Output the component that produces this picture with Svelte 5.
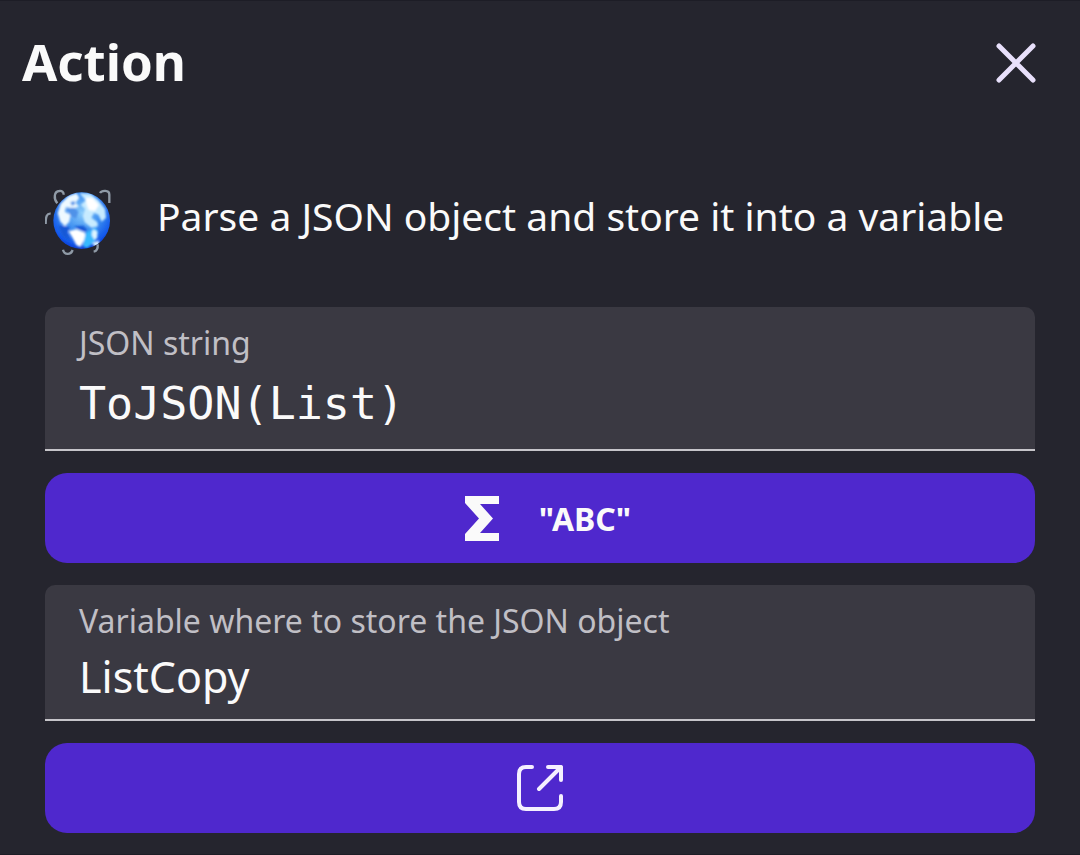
<script>
	let jsonString = 'ToJSON(List)';
	let variableName = 'ListCopy';
</script>

<main class="dialog">
	<header class="dialog-header">
		<h1>Action</h1>
		<button class="close" type="button" aria-label="Close">
			<svg viewBox="0 0 40 40" aria-hidden="true">
				<path d="M3 3 37 37M37 3 3 37" />
			</svg>
		</button>
	</header>

	<form class="content" on:submit|preventDefault>
		<div class="description">
			<svg class="globe" viewBox="45 39 198 198" aria-hidden="true">
				<defs>
					<radialGradient id="sea" cx="0.5" cy="0.36" r="0.66">
						<stop offset="0" stop-color="#8accfb" />
						<stop offset="0.5" stop-color="#3b8df0" />
						<stop offset="0.85" stop-color="#1257ea" />
						<stop offset="1" stop-color="#0a35cc" />
					</radialGradient>
					<filter id="soft" x="-10%" y="-10%" width="120%" height="120%">
						<feGaussianBlur stdDeviation="3.5" />
					</filter>
					<filter id="edge" x="-10%" y="-10%" width="120%" height="120%">
						<feGaussianBlur stdDeviation="1.5" />
					</filter>
					<clipPath id="ball">
						<circle cx="155" cy="134" r="85" />
					</clipPath>
				</defs>
				<g class="curls" filter="url(#edge)">
					<path d="M82 82C70 68 72 46 88 45 97 44 101 49 101 56" />
					<path d="M210 51C215 43 238 41 238 56V81" />
					<path d="M62 113C51 112 47 120 47 144" />
					<path d="M99 221C103 237 122 238 128 222" />
					<path d="M203 205C204 217 202 225 191 227" />
				</g>
				<circle cx="155" cy="134" r="85" fill="url(#sea)" filter="url(#edge)" />
				<g clip-path="url(#ball)">
					<g filter="url(#soft)">
						<path fill="#eef9ff" d="M92 83 116 60 140 52 148 66 137 80 147 92 132 97 108 94 105 107 122 116 118 137 105 151 91 137 83 112Z" />
						<path fill="#c7ebff" d="M148 52 181 53 205 73 225 99 228 125 215 137 205 116 192 111 184 125 202 138 204 151 184 155 164 139 158 119 165 99 152 87 167 73Z" />
						<path fill="#ffffff" d="M166 65 187 65 207 87 195 105 177 103 170 87Z" />
						<path fill="#ffffff" d="M116 166 139 160 165 170 166 187 151 213 139 207 128 186Z" />
						<path fill="#38baff" d="M167 171 196 153 205 169 194 198 171 216 158 210Z" />
						<path fill="#dff5ff" d="M188 160 201 166 202 185 194 192 185 178ZM187 202 207 193 207 207 195 213Z" />
						<path fill="#4f92e8" d="M109 97 132 95 145 107 138 128 122 119ZM121 79 133 75 136 84 126 89Z" />
						<path fill="#1459d6" d="M84 149 106 151 120 155 111 169 121 196 98 181ZM132 151 160 149 172 161 164 168 140 156Z" />
					</g>
				</g>
			</svg>
			<p>Parse a JSON object and store it into a variable</p>
		</div>

		<div class="field">
			<label for="json-string">JSON string</label>
			<input id="json-string" class="expression" type="text" spellcheck="false" bind:value={jsonString} />
		</div>
		<button class="action expression-action" type="button">
			<svg class="sigma" viewBox="0 0 34 45" aria-hidden="true">
				<path d="M0 0H34V8H15L28 22.5 15 37H34V45H0V38L14 22.5 0 7Z" />
			</svg>
			<span>"ABC"</span>
		</button>

		<div class="field">
			<label for="variable-name">Variable where to store the JSON object</label>
			<input id="variable-name" type="text" spellcheck="false" bind:value={variableName} />
		</div>
		<button class="action" type="button" aria-label="Open variables editor">
			<svg class="open" viewBox="0 0 46 46" aria-hidden="true">
				<path d="M15 2H9Q2 2 2 9V37Q2 44 9 44H37Q44 44 44 37V31M31 2H44V15M44 2 22 24" />
			</svg>
		</button>
	</form>
</main>

<style>
	:global(body) {
		margin: 0;
		background: #25252e;
	}

	.dialog {
		box-sizing: border-box;
		min-height: 100vh;
		border-top: 1px solid #1d1d26;
		border-bottom: 1px solid #1d1d26;
		color: #fafafa;
		font-family: 'Noto Sans', sans-serif;
	}

	.dialog-header {
		display: flex;
		justify-content: space-between;
		align-items: center;
		padding: 24px 44px 0 22px;
	}

	h1 {
		margin: 0;
		padding-bottom: 4px;
		font-size: 51px;
		line-height: 72px;
		font-weight: 700;
	}

	button {
		border: none;
		font-family: inherit;
		cursor: pointer;
	}

	.close {
		display: flex;
		padding: 0;
		background: none;
	}

	.close svg {
		width: 40px;
		height: 40px;
		fill: none;
		stroke: #e8e0fb;
		stroke-width: 5;
		stroke-linecap: round;
	}

	.content {
		display: flex;
		flex-direction: column;
		gap: 22px;
		padding: 88px 45px 20px;
	}

	.description {
		display: flex;
		align-items: flex-start;
		gap: 46px;
		margin-bottom: 30px;
	}

	.globe {
		flex: none;
		width: 66px;
		height: 66px;
	}

	.curls {
		fill: none;
		stroke: #8f9aa6;
		stroke-width: 7;
	}

	p {
		margin: 0;
		font-size: 39px;
		line-height: 54px;
	}

	.field {
		display: flex;
		flex-direction: column;
		padding: 12px 34px;
		background: #3a3942;
		border-bottom: 2px solid #c6c5ca;
		border-radius: 10px 10px 0 0;
	}

	.field label {
		color: #c0bfc5;
		font-size: 32px;
		line-height: 48px;
	}

	.field input {
		box-sizing: border-box;
		width: 100%;
		height: 62px;
		padding: 0;
		border: none;
		outline: none;
		background: none;
		color: inherit;
		font-family: inherit;
		font-size: 43px;
	}

	.field .expression {
		height: 70px;
		padding-top: 2px;
		font-family: 'DejaVu Sans Mono', monospace;
		font-size: 45px;
	}

	.action {
		display: flex;
		justify-content: center;
		align-items: center;
		gap: 40px;
		height: 90px;
		border-radius: 22px;
		background: #4f28cd;
		color: #fafafa;
		font-size: 32px;
		font-weight: 700;
	}

	.expression-action {
		padding-left: 22px;
	}

	.sigma {
		width: 34px;
		height: 45px;
		fill: currentColor;
	}

	.open {
		width: 46px;
		height: 46px;
		fill: none;
		stroke: #f5f0ff;
		stroke-width: 4;
		stroke-linecap: round;
		stroke-linejoin: round;
	}
</style>
